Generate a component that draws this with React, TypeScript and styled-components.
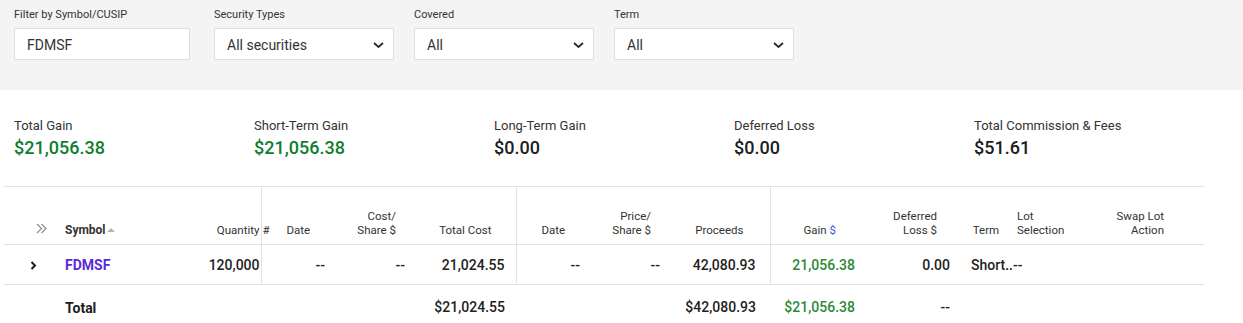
import styled, { createGlobalStyle } from 'styled-components'

const GlobalStyle = createGlobalStyle`
  body {
    margin: 0;
    background: #fff;
    font-family: Roboto, 'Noto Sans', sans-serif;
    color: #222;
  }
`

const FilterBar = styled.section`
  height: 90px;
  box-sizing: border-box;
  background: #f4f4f4;
  padding: 8px 14px 0;
  display: flex;
`

const Field = styled.div`
  width: 200px;
`

const FieldLabel = styled.div`
  font-size: 11px;
  line-height: 14px;
  color: #333;
  margin-bottom: 6px;
`

const InputBox = styled.div<{ $w: number }>`
  width: ${({ $w }) => $w}px;
  height: 32px;
  box-sizing: border-box;
  background: #fff;
  border: 1px solid #dedede;
  display: flex;
  align-items: center;
  justify-content: space-between;
  padding: 2px 9px 0 12px;
  font-size: 14px;
  color: #333;
`

const Summary = styled.section`
  height: 96px;
  box-sizing: border-box;
  padding: 28px 14px 0;
  display: grid;
  grid-template-columns: repeat(5, 240px);
`

const StatLabel = styled.div`
  font-size: 13px;
  line-height: 16px;
  color: #333;
`

const StatValue = styled.div<{ $gain?: boolean }>`
  margin-top: 3px;
  font-size: 18px;
  line-height: 22px;
  font-weight: 500;
  color: ${({ $gain }) => ($gain ? '#0f7d2c' : '#1c1c1c')};
`

const Table = styled.table`
  margin-left: 4px;
  width: 1200px;
  table-layout: fixed;
  border-collapse: collapse;
  border-top: 1px solid #e2e2e2;
`

const HeadRow = styled.tr`
  height: 58px;
  border-bottom: 1px solid #e2e2e2;
`

const BodyRow = styled.tr<{ $total?: boolean }>`
  height: ${({ $total }) => ($total ? 44 : 40)}px;
  border-bottom: ${({ $total }) => ($total ? 'none' : '1px solid #e2e2e2')};
`

type CellProps = {
  $align?: 'left' | 'right' | 'center'
  $pl?: number
  $pr?: number
  $divider?: boolean
}

const Th = styled.th<CellProps & { $bold?: boolean }>`
  vertical-align: bottom;
  padding: 0 ${({ $pr }) => $pr ?? 0}px 7px ${({ $pl }) => $pl ?? 0}px;
  text-align: ${({ $align }) => $align ?? 'right'};
  font-size: ${({ $bold }) => ($bold ? 12 : 11.5)}px;
  line-height: 14px;
  font-weight: ${({ $bold }) => ($bold ? 700 : 400)};
  color: #333;
  white-space: nowrap;
  border-left: ${({ $divider }) => ($divider ? '1px solid #e2e2e2' : 'none')};
`

const Td = styled.td<CellProps & { $tone?: 'gain' | 'link' | 'plain' }>`
  padding: 0 ${({ $pr }) => $pr ?? 10}px 0 ${({ $pl }) => $pl ?? 0}px;
  text-align: ${({ $align }) => $align ?? 'right'};
  font-size: 14px;
  font-weight: ${({ $tone }) => ($tone === 'link' ? 700 : 500)};
  color: ${({ $tone }) =>
    $tone === 'gain' ? '#2c8a36' : $tone === 'link' ? '#5a2bd8' : '#222'};
  white-space: nowrap;
  overflow: hidden;
  border-left: ${({ $divider }) => ($divider ? '1px solid #e2e2e2' : 'none')};
`

const TotalLabel = styled.td`
  padding: 2px 0 0 10px;
  font-size: 14px;
  font-weight: 700;
  color: #1c1c1c;
`

const SortUp = styled.span`
  display: inline-block;
  margin-left: 1px;
  vertical-align: 2px;
  border-left: 4px solid transparent;
  border-right: 4px solid transparent;
  border-bottom: 4px solid #b5b5b5;
`

const Hash = styled.span`
  margin-right: -10px;
  margin-left: 3px;
`

const Dollar = styled.span<{ $blue?: boolean }>`
  color: ${({ $blue }) => ($blue ? '#3b55e0' : 'inherit')};
`

const Chevron = () => (
  <svg width="11" height="6" viewBox="0 0 11 6" fill="none">
    <path d="M1 1l4.5 4L10 1" stroke="#2a2a2a" strokeWidth="1.8" />
  </svg>
)

const DoubleChevron = () => (
  <svg width="11" height="11" viewBox="0 0 11 11" fill="none">
    <path d="M1 1l4.5 4.5L1 10M5.5 1l4.5 4.5L5.5 10" stroke="#8a8a8a" strokeWidth="1.1" />
  </svg>
)

const RowChevron = () => (
  <svg width="7" height="9" viewBox="0 0 7 9" fill="none">
    <path d="M1.5 1l3.5 3.5L1.5 8" stroke="#1c1c1c" strokeWidth="2" />
  </svg>
)

const filters = [
  { label: 'Filter by Symbol/CUSIP', value: 'FDMSF', width: 176, select: false },
  { label: 'Security Types', value: 'All securities', width: 180, select: true },
  { label: 'Covered', value: 'All', width: 180, select: true },
  { label: 'Term', value: 'All', width: 180, select: true },
]

const stats = [
  { label: 'Total Gain', value: '$21,056.38', gain: true },
  { label: 'Short-Term Gain', value: '$21,056.38', gain: true },
  { label: 'Long-Term Gain', value: '$0.00', gain: false },
  { label: 'Deferred Loss', value: '$0.00', gain: false },
  { label: 'Total Commission & Fees', value: '$51.61', gain: false },
]

const colWidths = [51, 130, 76, 74, 80, 101, 74, 80, 100, 95, 95, 52, 68, 124]

const App = () => {
  return (
    <>
      <GlobalStyle />
      <FilterBar>
        {filters.map((f) => (
          <Field key={f.label}>
            <FieldLabel>{f.label}</FieldLabel>
            <InputBox $w={f.width}>
              {f.value}
              {f.select && <Chevron />}
            </InputBox>
          </Field>
        ))}
      </FilterBar>

      <Summary>
        {stats.map((s) => (
          <div key={s.label}>
            <StatLabel>{s.label}</StatLabel>
            <StatValue $gain={s.gain}>{s.value}</StatValue>
          </div>
        ))}
      </Summary>

      <Table>
        <colgroup>
          {colWidths.map((w, i) => (
            <col key={i} style={{ width: w }} />
          ))}
        </colgroup>
        <thead>
          <HeadRow>
            <Th $align="left" $pl={32}>
              <DoubleChevron />
            </Th>
            <Th $align="left" $pl={10} $bold>
              Symbol
              <SortUp />
            </Th>
            <Th $pr={1}>
              Quantity<Hash>#</Hash>
            </Th>
            <Th $align="center" $divider>
              Date
            </Th>
            <Th $pr={19}>
              Cost/
              <br />
              Share <Dollar>$</Dollar>
            </Th>
            <Th $pr={24}>Total Cost</Th>
            <Th $align="center" $divider>
              Date
            </Th>
            <Th $pr={19}>
              Price/
              <br />
              Share <Dollar>$</Dollar>
            </Th>
            <Th $pr={26}>Proceeds</Th>
            <Th $pr={29} $divider>
              Gain <Dollar $blue>$</Dollar>
            </Th>
            <Th $pr={23}>
              Deferred
              <br />
              Loss <Dollar>$</Dollar>
            </Th>
            <Th $align="center">Term</Th>
            <Th $align="left" $pl={5}>
              Lot
              <br />
              Selection
            </Th>
            <Th $pr={40}>
              Swap Lot
              <br />
              Action
            </Th>
          </HeadRow>
        </thead>
        <tbody>
          <BodyRow>
            <Td $align="left" $pl={26}>
              <RowChevron />
            </Td>
            <Td $align="left" $pl={10} $tone="link">
              FDMSF
            </Td>
            <Td $pr={1}>120,000</Td>
            <Td $divider>--</Td>
            <Td>--</Td>
            <Td $pr={11}>21,024.55</Td>
            <Td $divider>--</Td>
            <Td>--</Td>
            <Td $pr={14}>42,080.93</Td>
            <Td $divider $tone="gain">
              21,056.38
            </Td>
            <Td>0.00</Td>
            <Td $align="left" $pl={11} $pr={2}>
              Short..
            </Td>
            <Td $align="left" $pl={1}>
              --
            </Td>
            <Td />
          </BodyRow>
          <BodyRow $total>
            <td />
            <TotalLabel>Total</TotalLabel>
            <Td />
            <Td />
            <Td />
            <Td $pr={11}>$21,024.55</Td>
            <Td />
            <Td />
            <Td $pr={14}>$42,080.93</Td>
            <Td $tone="gain">$21,056.38</Td>
            <Td>--</Td>
            <Td />
            <Td />
            <Td />
          </BodyRow>
        </tbody>
      </Table>
    </>
  )
}

export default App
